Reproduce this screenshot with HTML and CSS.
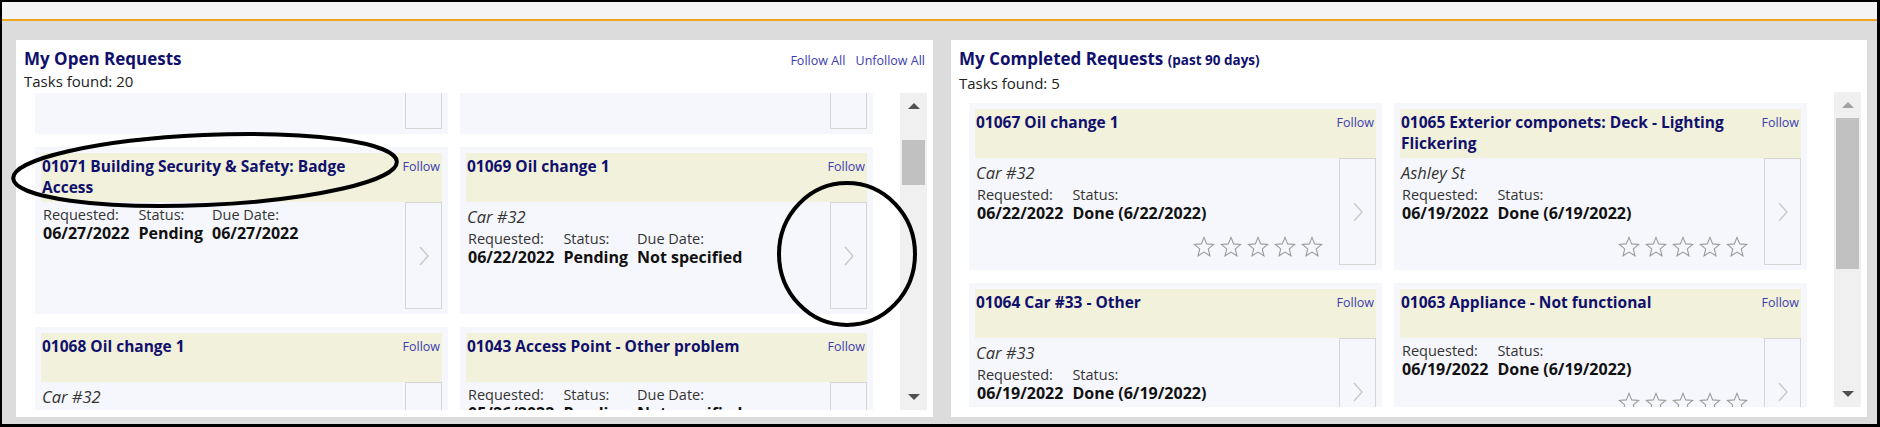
FILE: index.html
```html
<!DOCTYPE html>
<html lang="en">
<head>
    <meta charset="UTF-8">
    <meta name="viewport" content="width=device-width, initial-scale=1.0">
    <link rel="stylesheet" href="styles.css">
    <title>My Requests</title>
</head>
<body>
    <div class="frame">
        <div class="topbar"></div>

        <div class="main">
            <!-- open requests -->
            <section class="panel panel-open">
                <div class="panel-head">
                    <div class="title-row">
                        <h2 class="panel-title">My Open Requests</h2>
                        <div class="bulk-links">
                            <a href="#">Follow All</a>
                            <a href="#">Unfollow All</a>
                        </div>
                    </div>
                    <div class="found">Tasks found: 20</div>
                </div>

                <div class="viewport">
                    <div class="list-clip">
                        <div class="card-list scrolled">
                            <div class="card">
                                <div class="card-head">
                                    <div class="card-title">01072 Oil change 1</div>
                                    <a class="follow" href="#">Follow</a>
                                </div>
                                <div class="card-body">
                                    <div class="card-info">
                                        <div class="subtitle">Car #31</div>
                                        <div class="fields">
                                            <span class="lbl">Requested:</span><span class="val">06/28/2022</span>
                                            <span class="lbl">Status:</span><span class="val">Pending</span>
                                            <span class="lbl">Due Date:</span><span class="val">Not specified</span>
                                        </div>
                                    </div>
                                    <a class="chev" href="#"><svg width="10" height="20" viewBox="0 0 10 20"><polyline points="1,1 9,10 1,19"/></svg></a>
                                </div>
                            </div>
                            <div class="card">
                                <div class="card-head">
                                    <div class="card-title">01070 Oil change 1</div>
                                    <a class="follow" href="#">Follow</a>
                                </div>
                                <div class="card-body">
                                    <div class="card-info">
                                        <div class="subtitle">Car #32</div>
                                        <div class="fields">
                                            <span class="lbl">Requested:</span><span class="val">06/27/2022</span>
                                            <span class="lbl">Status:</span><span class="val">Pending</span>
                                            <span class="lbl">Due Date:</span><span class="val">Not specified</span>
                                        </div>
                                    </div>
                                    <a class="chev" href="#"><svg width="10" height="20" viewBox="0 0 10 20"><polyline points="1,1 9,10 1,19"/></svg></a>
                                </div>
                            </div>

                            <div class="card">
                                <div class="card-head">
                                    <div class="card-title">01071 Building Security &amp; Safety: Badge Access</div>
                                    <a class="follow" href="#">Follow</a>
                                </div>
                                <div class="card-body">
                                    <div class="card-info">
                                        <div class="fields">
                                            <span class="lbl">Requested:</span><span class="val">06/27/2022</span>
                                            <span class="lbl">Status:</span><span class="val">Pending</span>
                                            <span class="lbl">Due Date:</span><span class="val">06/27/2022</span>
                                        </div>
                                    </div>
                                    <a class="chev" href="#"><svg width="10" height="20" viewBox="0 0 10 20"><polyline points="1,1 9,10 1,19"/></svg></a>
                                </div>
                            </div>
                            <div class="card">
                                <div class="card-head">
                                    <div class="card-title">01069 Oil change 1</div>
                                    <a class="follow" href="#">Follow</a>
                                </div>
                                <div class="card-body">
                                    <div class="card-info">
                                        <div class="subtitle">Car #32</div>
                                        <div class="fields">
                                            <span class="lbl">Requested:</span><span class="val">06/22/2022</span>
                                            <span class="lbl">Status:</span><span class="val">Pending</span>
                                            <span class="lbl">Due Date:</span><span class="val">Not specified</span>
                                        </div>
                                    </div>
                                    <a class="chev" href="#"><svg width="10" height="20" viewBox="0 0 10 20"><polyline points="1,1 9,10 1,19"/></svg></a>
                                </div>
                            </div>

                            <div class="card">
                                <div class="card-head">
                                    <div class="card-title">01068 Oil change 1</div>
                                    <a class="follow" href="#">Follow</a>
                                </div>
                                <div class="card-body">
                                    <div class="card-info">
                                        <div class="subtitle">Car #32</div>
                                        <div class="fields">
                                            <span class="lbl">Requested:</span><span class="val">06/22/2022</span>
                                            <span class="lbl">Status:</span><span class="val">Pending</span>
                                            <span class="lbl">Due Date:</span><span class="val">Not specified</span>
                                        </div>
                                    </div>
                                    <a class="chev" href="#"><svg width="10" height="20" viewBox="0 0 10 20"><polyline points="1,1 9,10 1,19"/></svg></a>
                                </div>
                            </div>
                            <div class="card">
                                <div class="card-head">
                                    <div class="card-title">01043 Access Point - Other problem</div>
                                    <a class="follow" href="#">Follow</a>
                                </div>
                                <div class="card-body">
                                    <div class="card-info">
                                        <div class="fields">
                                            <span class="lbl">Requested:</span><span class="val">05/26/2022</span>
                                            <span class="lbl">Status:</span><span class="val">Pending</span>
                                            <span class="lbl">Due Date:</span><span class="val">Not specified</span>
                                        </div>
                                    </div>
                                    <a class="chev" href="#"><svg width="10" height="20" viewBox="0 0 10 20"><polyline points="1,1 9,10 1,19"/></svg></a>
                                </div>
                            </div>
                        </div>
                    </div>

                    <div class="scrollbar">
                        <span class="sb-btn"><i class="arrow-up"></i></span>
                        <div class="sb-track"><div class="sb-thumb" style="margin-top: 21px; height: 45px;"></div></div>
                        <span class="sb-btn"><i class="arrow-down"></i></span>
                    </div>
                </div>
            </section>

            <!-- completed requests -->
            <section class="panel panel-done">
                <div class="panel-head">
                    <div class="title-row">
                        <h2 class="panel-title">My Completed Requests <small>(past 90 days)</small></h2>
                    </div>
                    <div class="found">Tasks found: 5</div>
                </div>

                <div class="viewport">
                    <div class="list-clip">
                        <div class="card-list">
                            <div class="card">
                                <div class="card-head">
                                    <div class="card-title">01067 Oil change 1</div>
                                    <a class="follow" href="#">Follow</a>
                                </div>
                                <div class="card-body">
                                    <div class="card-info">
                                        <div class="subtitle">Car #32</div>
                                        <div class="fields">
                                            <span class="lbl">Requested:</span><span class="val">06/22/2022</span>
                                            <span class="lbl">Status:</span><span class="val">Done (6/22/2022)</span>
                                        </div>
                                        <div class="stars">
                                            <svg viewBox="0 0 24 24"><polygon points="12,1.5 14.9,8.6 22.5,9.2 16.7,14.1 18.5,21.6 12,17.6 5.5,21.6 7.3,14.1 1.5,9.2 9.1,8.6"/></svg>
                                            <svg viewBox="0 0 24 24"><polygon points="12,1.5 14.9,8.6 22.5,9.2 16.7,14.1 18.5,21.6 12,17.6 5.5,21.6 7.3,14.1 1.5,9.2 9.1,8.6"/></svg>
                                            <svg viewBox="0 0 24 24"><polygon points="12,1.5 14.9,8.6 22.5,9.2 16.7,14.1 18.5,21.6 12,17.6 5.5,21.6 7.3,14.1 1.5,9.2 9.1,8.6"/></svg>
                                            <svg viewBox="0 0 24 24"><polygon points="12,1.5 14.9,8.6 22.5,9.2 16.7,14.1 18.5,21.6 12,17.6 5.5,21.6 7.3,14.1 1.5,9.2 9.1,8.6"/></svg>
                                            <svg viewBox="0 0 24 24"><polygon points="12,1.5 14.9,8.6 22.5,9.2 16.7,14.1 18.5,21.6 12,17.6 5.5,21.6 7.3,14.1 1.5,9.2 9.1,8.6"/></svg>
                                        </div>
                                    </div>
                                    <a class="chev" href="#"><svg width="10" height="20" viewBox="0 0 10 20"><polyline points="1,1 9,10 1,19"/></svg></a>
                                </div>
                            </div>
                            <div class="card">
                                <div class="card-head">
                                    <div class="card-title">01065 Exterior componets: Deck - Lighting Flickering</div>
                                    <a class="follow" href="#">Follow</a>
                                </div>
                                <div class="card-body">
                                    <div class="card-info">
                                        <div class="subtitle">Ashley St</div>
                                        <div class="fields">
                                            <span class="lbl">Requested:</span><span class="val">06/19/2022</span>
                                            <span class="lbl">Status:</span><span class="val">Done (6/19/2022)</span>
                                        </div>
                                        <div class="stars">
                                            <svg viewBox="0 0 24 24"><polygon points="12,1.5 14.9,8.6 22.5,9.2 16.7,14.1 18.5,21.6 12,17.6 5.5,21.6 7.3,14.1 1.5,9.2 9.1,8.6"/></svg>
                                            <svg viewBox="0 0 24 24"><polygon points="12,1.5 14.9,8.6 22.5,9.2 16.7,14.1 18.5,21.6 12,17.6 5.5,21.6 7.3,14.1 1.5,9.2 9.1,8.6"/></svg>
                                            <svg viewBox="0 0 24 24"><polygon points="12,1.5 14.9,8.6 22.5,9.2 16.7,14.1 18.5,21.6 12,17.6 5.5,21.6 7.3,14.1 1.5,9.2 9.1,8.6"/></svg>
                                            <svg viewBox="0 0 24 24"><polygon points="12,1.5 14.9,8.6 22.5,9.2 16.7,14.1 18.5,21.6 12,17.6 5.5,21.6 7.3,14.1 1.5,9.2 9.1,8.6"/></svg>
                                            <svg viewBox="0 0 24 24"><polygon points="12,1.5 14.9,8.6 22.5,9.2 16.7,14.1 18.5,21.6 12,17.6 5.5,21.6 7.3,14.1 1.5,9.2 9.1,8.6"/></svg>
                                        </div>
                                    </div>
                                    <a class="chev" href="#"><svg width="10" height="20" viewBox="0 0 10 20"><polyline points="1,1 9,10 1,19"/></svg></a>
                                </div>
                            </div>

                            <div class="card">
                                <div class="card-head">
                                    <div class="card-title">01064 Car #33 - Other</div>
                                    <a class="follow" href="#">Follow</a>
                                </div>
                                <div class="card-body">
                                    <div class="card-info">
                                        <div class="subtitle">Car #33</div>
                                        <div class="fields">
                                            <span class="lbl">Requested:</span><span class="val">06/19/2022</span>
                                            <span class="lbl">Status:</span><span class="val">Done (6/19/2022)</span>
                                        </div>
                                        <div class="stars">
                                            <svg viewBox="0 0 24 24"><polygon points="12,1.5 14.9,8.6 22.5,9.2 16.7,14.1 18.5,21.6 12,17.6 5.5,21.6 7.3,14.1 1.5,9.2 9.1,8.6"/></svg>
                                            <svg viewBox="0 0 24 24"><polygon points="12,1.5 14.9,8.6 22.5,9.2 16.7,14.1 18.5,21.6 12,17.6 5.5,21.6 7.3,14.1 1.5,9.2 9.1,8.6"/></svg>
                                            <svg viewBox="0 0 24 24"><polygon points="12,1.5 14.9,8.6 22.5,9.2 16.7,14.1 18.5,21.6 12,17.6 5.5,21.6 7.3,14.1 1.5,9.2 9.1,8.6"/></svg>
                                            <svg viewBox="0 0 24 24"><polygon points="12,1.5 14.9,8.6 22.5,9.2 16.7,14.1 18.5,21.6 12,17.6 5.5,21.6 7.3,14.1 1.5,9.2 9.1,8.6"/></svg>
                                            <svg viewBox="0 0 24 24"><polygon points="12,1.5 14.9,8.6 22.5,9.2 16.7,14.1 18.5,21.6 12,17.6 5.5,21.6 7.3,14.1 1.5,9.2 9.1,8.6"/></svg>
                                        </div>
                                    </div>
                                    <a class="chev" href="#"><svg width="10" height="20" viewBox="0 0 10 20"><polyline points="1,1 9,10 1,19"/></svg></a>
                                </div>
                            </div>
                            <div class="card">
                                <div class="card-head">
                                    <div class="card-title">01063 Appliance - Not functional</div>
                                    <a class="follow" href="#">Follow</a>
                                </div>
                                <div class="card-body">
                                    <div class="card-info">
                                        <div class="fields">
                                            <span class="lbl">Requested:</span><span class="val">06/19/2022</span>
                                            <span class="lbl">Status:</span><span class="val">Done (6/19/2022)</span>
                                        </div>
                                        <div class="stars">
                                            <svg viewBox="0 0 24 24"><polygon points="12,1.5 14.9,8.6 22.5,9.2 16.7,14.1 18.5,21.6 12,17.6 5.5,21.6 7.3,14.1 1.5,9.2 9.1,8.6"/></svg>
                                            <svg viewBox="0 0 24 24"><polygon points="12,1.5 14.9,8.6 22.5,9.2 16.7,14.1 18.5,21.6 12,17.6 5.5,21.6 7.3,14.1 1.5,9.2 9.1,8.6"/></svg>
                                            <svg viewBox="0 0 24 24"><polygon points="12,1.5 14.9,8.6 22.5,9.2 16.7,14.1 18.5,21.6 12,17.6 5.5,21.6 7.3,14.1 1.5,9.2 9.1,8.6"/></svg>
                                            <svg viewBox="0 0 24 24"><polygon points="12,1.5 14.9,8.6 22.5,9.2 16.7,14.1 18.5,21.6 12,17.6 5.5,21.6 7.3,14.1 1.5,9.2 9.1,8.6"/></svg>
                                            <svg viewBox="0 0 24 24"><polygon points="12,1.5 14.9,8.6 22.5,9.2 16.7,14.1 18.5,21.6 12,17.6 5.5,21.6 7.3,14.1 1.5,9.2 9.1,8.6"/></svg>
                                        </div>
                                    </div>
                                    <a class="chev" href="#"><svg width="10" height="20" viewBox="0 0 10 20"><polyline points="1,1 9,10 1,19"/></svg></a>
                                </div>
                            </div>
                        </div>
                    </div>

                    <div class="scrollbar">
                        <span class="sb-btn"><i class="arrow-up off"></i></span>
                        <div class="sb-track"><div class="sb-thumb" style="margin-top: 0; height: 151px;"></div></div>
                        <span class="sb-btn"><i class="arrow-down"></i></span>
                    </div>
                </div>
            </section>
        </div>
    </div>

    <!-- hand-drawn marks on top of the page -->
    <svg class="marks" width="1880" height="427" viewBox="0 0 1880 427">
        <ellipse cx="205" cy="170" rx="192" ry="35" transform="rotate(-2.5 205 170)"/>
        <ellipse cx="847" cy="254" rx="68" ry="71"/>
    </svg>
</body>
</html>
```

FILE: styles.css
```css
:root {
    --page-bg: #dcdcdc;
    --navy: #10106c;
    --link: #3c3cb0;
    --card-bg: #f6f7fc;
    --card-head: #f2f2dc;
}

body {
    margin: 0;
    position: relative;
    font-family: 'Open Sans', 'Noto Sans', sans-serif;
    color: #222;
}

a {
    text-decoration: none;
}

.frame {
    height: 427px;
    box-sizing: border-box;
    border: 2px solid #000;
    border-right-width: 3px;
    border-bottom-width: 3px;
    background-color: var(--page-bg);
    display: flex;
    flex-direction: column;
}

.topbar {
    height: 17px;
    flex-shrink: 0;
    background-color: #f4f4f4;
    border-bottom: 2px solid #f0a31c;
}

.main {
    flex: 1;
    min-height: 0;
    display: flex;
    gap: 18px;
    padding: 19px 10px 7px 14px;
}

.panel {
    background-color: #fff;
    display: flex;
    flex-direction: column;
    min-height: 0;
}

.panel-open {
    width: 917px;
    padding-bottom: 7px;
}

.panel-done {
    width: 916px;
    padding-bottom: 10px;
}

.panel-head {
    height: 52px;
    box-sizing: border-box;
    padding: 6px 8px 0 8px;
    flex-shrink: 0;
}

.panel-open .panel-head {
    height: 53px;
}

.title-row {
    display: flex;
    justify-content: space-between;
    align-items: baseline;
}

.panel-title {
    margin: 0;
    font-size: 17px;
    line-height: 25px;
    font-weight: 700;
    color: var(--navy);
}

.panel-title small {
    font-size: 13.5px;
}

.bulk-links a {
    font-size: 12.5px;
    color: var(--link);
    margin-left: 6px;
}

.found {
    font-size: 15px;
    line-height: 21px;
    color: #222;
}

/* card list with its own scrollbar */
.viewport {
    flex: 1;
    min-height: 0;
    display: flex;
}

.list-clip {
    flex: 1;
    overflow: hidden;
}

.card-list {
    display: grid;
    grid-template-columns: repeat(2, 413px);
    grid-auto-rows: 167px;
    gap: 13px 12px;
    padding: 11px 0 0 19px;
}

.panel-done .card-list {
    padding-left: 18px;
}

.card-list.scrolled {
    margin-top: -137px;
}

.card {
    box-sizing: border-box;
    padding: 6px 6px 5px;
    background-color: var(--card-bg);
    display: flex;
    flex-direction: column;
}

.card-head {
    height: 49px;
    flex-shrink: 0;
    box-sizing: border-box;
    padding: 3px 2px 0 1px;
    background-color: var(--card-head);
    display: flex;
    justify-content: space-between;
    align-items: flex-start;
}

.card-title {
    max-width: 350px;
    font-size: 15.5px;
    line-height: 21px;
    font-weight: 700;
    color: var(--navy);
}

.follow {
    font-size: 12.5px;
    line-height: 21px;
    color: var(--link);
}

.card-body {
    flex: 1;
    min-height: 0;
    display: flex;
}

.card-info {
    flex: 1;
    padding: 4px 0 0 2px;
}

.subtitle {
    font-size: 16.5px;
    line-height: 22px;
    font-style: italic;
    color: #333;
    margin: 0 0 2px -1px;
}

.fields {
    display: grid;
    grid-template-rows: auto auto;
    grid-auto-flow: column;
    justify-content: start;
    column-gap: 9px;
}

.lbl {
    font-size: 14.5px;
    line-height: 17px;
    color: #333;
}

.val {
    font-size: 16px;
    line-height: 20px;
    font-weight: 700;
    color: #111;
}

.stars {
    display: flex;
    justify-content: flex-end;
    gap: 5px;
    margin-top: 13px;
    padding-right: 16px;
}

.stars svg {
    width: 22px;
    height: 22px;
    fill: none;
    stroke: #9c9c9c;
    stroke-width: 1.2;
}

.chev {
    width: 37px;
    flex-shrink: 0;
    box-sizing: border-box;
    border: 1px solid #d6d6d6;
    display: flex;
    align-items: center;
    justify-content: center;
}

.chev svg {
    fill: none;
    stroke: #c9c9c9;
    stroke-width: 1.4;
}

/* scrollbar */
.scrollbar {
    width: 27px;
    margin: 0 6px 0 27px;
    background-color: #f0f0f0;
    display: flex;
    flex-direction: column;
}

.panel-done .scrollbar {
    margin-left: 26px;
}

.sb-btn {
    height: 26px;
    flex-shrink: 0;
    display: flex;
    align-items: center;
    justify-content: center;
}

.sb-track {
    flex: 1;
    padding: 0 2px;
}

.sb-thumb {
    background-color: #c1c1c1;
}

.arrow-up,
.arrow-down {
    width: 0;
    height: 0;
    border-left: 6px solid transparent;
    border-right: 6px solid transparent;
}

.arrow-up {
    border-bottom: 6px solid #505050;
}

.arrow-up.off {
    border-bottom-color: #a3a3a3;
}

.arrow-down {
    border-top: 6px solid #505050;
}

.marks {
    position: absolute;
    top: 0;
    left: 0;
    pointer-events: none;
}

.marks ellipse {
    fill: none;
    stroke: #000;
    stroke-width: 4;
}
```
